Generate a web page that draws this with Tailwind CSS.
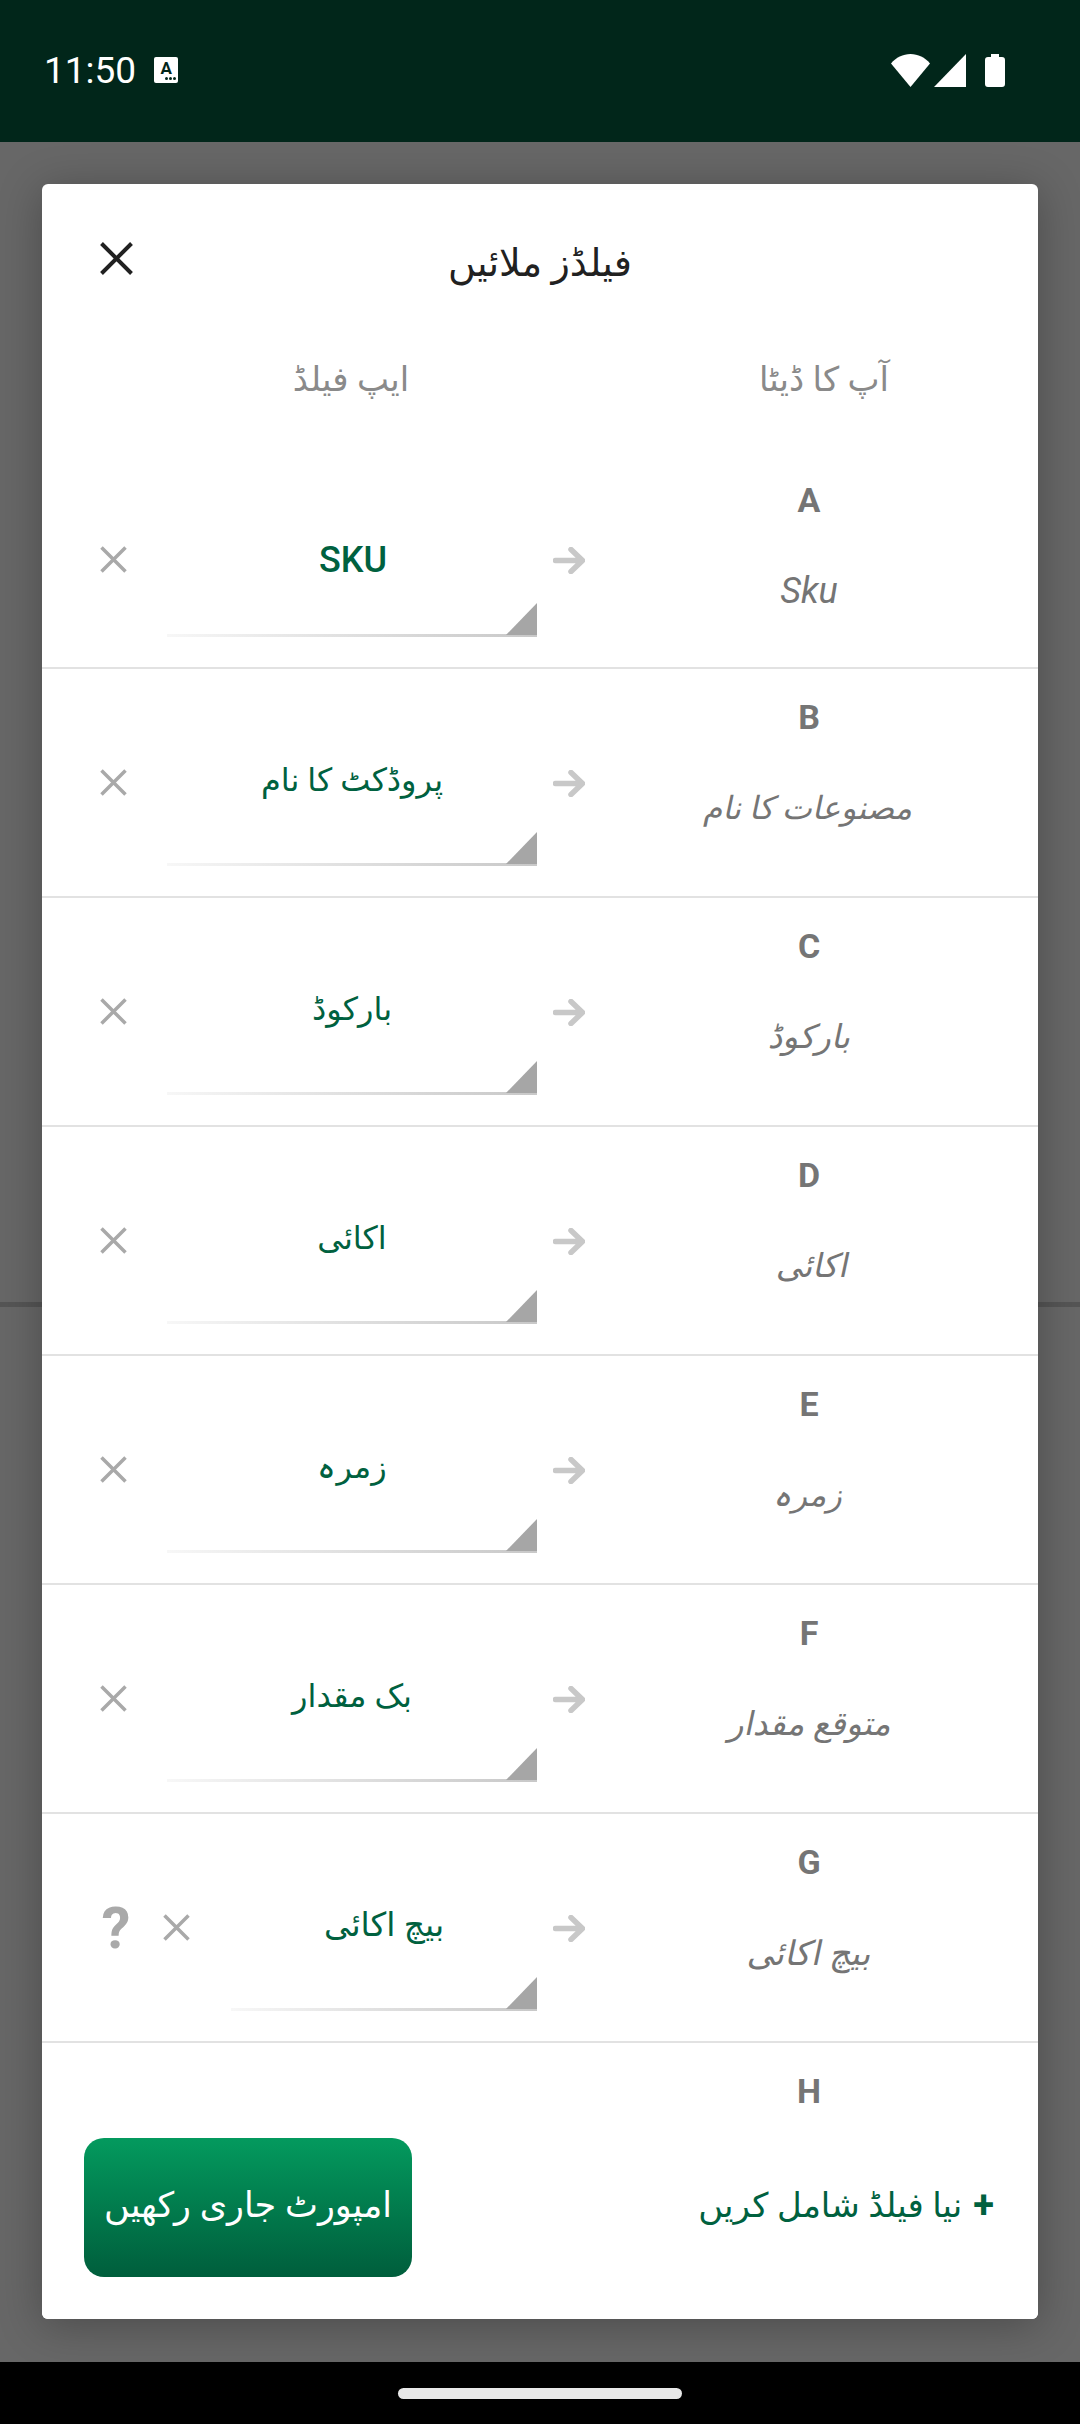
<!DOCTYPE html>
<html lang="ur">
<head>
<meta charset="UTF-8">
<meta name="viewport" content="width=device-width, initial-scale=1.0">
<title>Match fields</title>
<script src="https://cdn.jsdelivr.net/npm/@tailwindcss/browser@4"></script>
</head>
<body class="font-['Roboto','DejaVu_Sans',sans-serif]">
<div class="flex flex-col h-[2424px] w-[1080px] overflow-hidden">

  <!-- status bar -->
  <header class="h-[142px] shrink-0 bg-[#01261a] flex items-center justify-between pl-[44px] pr-[75px] pb-[2px] text-white">
    <div class="flex items-center gap-[18px]">
      <span class="text-[37px] leading-none">11:50</span>
      <div class="w-[24px] h-[26px] bg-white rounded-[2px] flex flex-col items-center pt-[3px] text-[#01261a]">
        <span class="text-[17px] font-bold leading-[16px]">A</span>
        <div class="flex gap-[1px] w-full justify-end pr-[2px] mt-[1px]">
          <span class="w-[3px] h-[3px] rounded-full bg-[#01261a]"></span>
          <span class="w-[3px] h-[3px] rounded-full bg-[#01261a]"></span>
          <span class="w-[3px] h-[3px] rounded-full bg-[#01261a]"></span>
        </div>
      </div>
    </div>
    <div class="flex items-center">
      <svg class="w-[39px] h-[33px]" viewBox="0 0 39 33"><path d="M19.5 33 0 9.5C5 3.500 12 0 19.500 0S34 3.500 39 9.500Z" fill="#fff"/></svg>
      <svg class="w-[32px] h-[33px] ml-[4px]" viewBox="0 0 32 33"><path d="M0 33 32 0V33Z" fill="#fff"/></svg>
      <svg class="w-[20px] h-[33px] ml-[19px]" viewBox="0 0 20 33"><path d="M6 0h8v3h3a3 3 0 0 1 3 3v24a3 3 0 0 1-3 3H3a3 3 0 0 1-3-3V6a3 3 0 0 1 3-3h3Z" fill="#fff"/></svg>
    </div>
  </header>

  <main class="relative flex-1 min-h-0 flex flex-col bg-[#676767] pt-[42px] px-[42px] pb-[43px]">
    <!-- divider of the page behind the dialog -->
    <div class="absolute left-0 right-0 top-[1160px] h-[5px] bg-[#555]"></div>

    <div class="relative flex-1 min-h-0 flex flex-col bg-white rounded-[6px] overflow-hidden shadow-[0_6px_44px_rgba(0,0,0,0.28)]">
      <!-- title -->
      <div class="h-[158px] shrink-0 grid grid-cols-[1fr_auto_1fr]">
        <svg class="w-[33px] h-[33px] ml-[58px] mt-[58px]" viewBox="0 0 33 33"><path d="M1.500 1.500 31.500 31.500M31.500 1.500 1.500 31.500" stroke="#212121" stroke-width="4" fill="none"/></svg>
        <h1 class="h-[60px] mt-[49px] leading-[60px] text-[38px] text-[#212121] font-normal" dir="rtl">فیلڈز ملائیں</h1>
      </div>
      <!-- column heads -->
      <div class="h-[74px] shrink-0 grid grid-cols-[618px_328px] items-center text-center text-[34px] text-[#8a8a8a]">
        <div dir="rtl">ایپ فیلڈ</div>
        <div dir="rtl">آپ کا ڈیٹا</div>
      </div>

      <!-- rows -->
      <div class="flex-1 min-h-0 overflow-hidden mt-[36px]">

        <div class="h-[217px] flex items-center pl-[58px] border-b-2 border-[#e2e2e2]">
          <svg class="w-[27px] h-[27px] shrink-0" viewBox="0 0 27 27"><path d="M1.500 1.500 25.500 25.500M25.500 1.500 1.500 25.500" stroke="#a9a9a9" stroke-width="3.500" fill="none"/></svg>
          <div class="relative ml-[40px] w-[370px] h-[154px] shrink-0 flex items-center justify-center pl-[2px] text-[36px] font-medium text-[#00613f]">
            SKU
            <div class="absolute left-0 right-0 bottom-0 h-[3px] bg-linear-to-r from-[#f7f7f7] to-[#c8c8c8]"></div>
            <svg class="absolute right-0 bottom-[2px] w-[31px] h-[32px]" viewBox="0 0 31 32"><path d="M0 32 31 0V32Z" fill="#a6a6a6"/></svg>
          </div>
          <svg class="w-[32px] h-[27px] ml-[16px] mt-[1px] shrink-0" viewBox="0 0 32 27"><path d="M2.500 13.500H29M18 2.500 29.500 13.500 18 24.500" stroke="#c8c8c8" stroke-width="5.500" stroke-linecap="round" stroke-linejoin="round" fill="none"/></svg>
          <div class="flex-1 mr-[5px] self-start flex flex-col items-center">
            <div class="mt-[24px] h-[48px] leading-[48px] text-[34px] font-bold text-[#757575]">A</div>
            <div class="mt-[37px] h-[60px] leading-[60px] text-[36px] italic text-[#757575]">Sku</div>
          </div>
        </div>

        <div class="h-[229px] flex items-center pl-[58px] border-b-2 border-[#e2e2e2]">
          <svg class="w-[27px] h-[27px] shrink-0" viewBox="0 0 27 27"><path d="M1.500 1.500 25.500 25.500M25.500 1.500 1.500 25.500" stroke="#a9a9a9" stroke-width="3.500" fill="none"/></svg>
          <div class="relative ml-[40px] w-[370px] h-[167px] shrink-0 flex items-center justify-center pb-[6px] text-[32px] text-[#00613f]" dir="rtl">
            پروڈکٹ کا نام
            <div class="absolute left-0 right-0 bottom-0 h-[3px] bg-linear-to-r from-[#f7f7f7] to-[#c8c8c8]"></div>
            <svg class="absolute right-0 bottom-[2px] w-[31px] h-[32px]" viewBox="0 0 31 32"><path d="M0 32 31 0V32Z" fill="#a6a6a6"/></svg>
          </div>
          <svg class="w-[32px] h-[27px] ml-[16px] mt-[1px] shrink-0" viewBox="0 0 32 27"><path d="M2.500 13.500H29M18 2.500 29.500 13.500 18 24.500" stroke="#c8c8c8" stroke-width="5.500" stroke-linecap="round" stroke-linejoin="round" fill="none"/></svg>
          <div class="flex-1 mr-[5px] self-start flex flex-col items-center">
            <div class="mt-[24px] h-[48px] leading-[48px] text-[34px] font-bold text-[#757575]">B</div>
            <div class="mt-[37px] ml-[2px] h-[60px] leading-[60px] text-[32px] text-[#757575] -skew-x-12" dir="rtl">مصنوعات کا نام</div>
          </div>
        </div>

        <div class="h-[229px] flex items-center pl-[58px] border-b-2 border-[#e2e2e2]">
          <svg class="w-[27px] h-[27px] shrink-0" viewBox="0 0 27 27"><path d="M1.500 1.500 25.500 25.500M25.500 1.500 1.500 25.500" stroke="#a9a9a9" stroke-width="3.500" fill="none"/></svg>
          <div class="relative ml-[40px] w-[370px] h-[167px] shrink-0 flex items-center justify-center pb-[6px] text-[32px] text-[#00613f]" dir="rtl">
            بارکوڈ
            <div class="absolute left-0 right-0 bottom-0 h-[3px] bg-linear-to-r from-[#f7f7f7] to-[#c8c8c8]"></div>
            <svg class="absolute right-0 bottom-[2px] w-[31px] h-[32px]" viewBox="0 0 31 32"><path d="M0 32 31 0V32Z" fill="#a6a6a6"/></svg>
          </div>
          <svg class="w-[32px] h-[27px] ml-[16px] mt-[1px] shrink-0" viewBox="0 0 32 27"><path d="M2.500 13.500H29M18 2.500 29.500 13.500 18 24.500" stroke="#c8c8c8" stroke-width="5.500" stroke-linecap="round" stroke-linejoin="round" fill="none"/></svg>
          <div class="flex-1 mr-[5px] self-start flex flex-col items-center">
            <div class="mt-[24px] h-[48px] leading-[48px] text-[34px] font-bold text-[#757575]">C</div>
            <div class="mt-[37px] ml-[5px] h-[60px] leading-[60px] text-[33px] text-[#757575] -skew-x-12" dir="rtl">بارکوڈ</div>
          </div>
        </div>

        <div class="h-[229px] flex items-center pl-[58px] border-b-2 border-[#e2e2e2]">
          <svg class="w-[27px] h-[27px] shrink-0" viewBox="0 0 27 27"><path d="M1.500 1.500 25.500 25.500M25.500 1.500 1.500 25.500" stroke="#a9a9a9" stroke-width="3.500" fill="none"/></svg>
          <div class="relative ml-[40px] w-[370px] h-[167px] shrink-0 flex items-center justify-center pb-[6px] text-[32px] text-[#00613f]" dir="rtl">
            اکائی
            <div class="absolute left-0 right-0 bottom-0 h-[3px] bg-linear-to-r from-[#f7f7f7] to-[#c8c8c8]"></div>
            <svg class="absolute right-0 bottom-[2px] w-[31px] h-[32px]" viewBox="0 0 31 32"><path d="M0 32 31 0V32Z" fill="#a6a6a6"/></svg>
          </div>
          <svg class="w-[32px] h-[27px] ml-[16px] mt-[1px] shrink-0" viewBox="0 0 32 27"><path d="M2.500 13.500H29M18 2.500 29.500 13.500 18 24.500" stroke="#c8c8c8" stroke-width="5.500" stroke-linecap="round" stroke-linejoin="round" fill="none"/></svg>
          <div class="flex-1 mr-[5px] self-start flex flex-col items-center">
            <div class="mt-[24px] h-[48px] leading-[48px] text-[34px] font-bold text-[#757575]">D</div>
            <div class="mt-[37px] ml-[10px] h-[60px] leading-[60px] text-[33px] text-[#757575] -skew-x-12" dir="rtl">اکائی</div>
          </div>
        </div>

        <div class="h-[229px] flex items-center pl-[58px] border-b-2 border-[#e2e2e2]">
          <svg class="w-[27px] h-[27px] shrink-0" viewBox="0 0 27 27"><path d="M1.500 1.500 25.500 25.500M25.500 1.500 1.500 25.500" stroke="#a9a9a9" stroke-width="3.500" fill="none"/></svg>
          <div class="relative ml-[40px] w-[370px] h-[167px] shrink-0 flex items-center justify-center pb-[6px] text-[32px] text-[#00613f]" dir="rtl">
            زمرہ
            <div class="absolute left-0 right-0 bottom-0 h-[3px] bg-linear-to-r from-[#f7f7f7] to-[#c8c8c8]"></div>
            <svg class="absolute right-0 bottom-[2px] w-[31px] h-[32px]" viewBox="0 0 31 32"><path d="M0 32 31 0V32Z" fill="#a6a6a6"/></svg>
          </div>
          <svg class="w-[32px] h-[27px] ml-[16px] mt-[1px] shrink-0" viewBox="0 0 32 27"><path d="M2.500 13.500H29M18 2.500 29.500 13.500 18 24.500" stroke="#c8c8c8" stroke-width="5.500" stroke-linecap="round" stroke-linejoin="round" fill="none"/></svg>
          <div class="flex-1 mr-[5px] self-start flex flex-col items-center">
            <div class="mt-[24px] h-[48px] leading-[48px] text-[34px] font-bold text-[#757575]">E</div>
            <div class="mt-[37px] ml-[2px] h-[60px] leading-[60px] text-[32px] text-[#757575] -skew-x-12" dir="rtl">زمرہ</div>
          </div>
        </div>

        <div class="h-[229px] flex items-center pl-[58px] border-b-2 border-[#e2e2e2]">
          <svg class="w-[27px] h-[27px] shrink-0" viewBox="0 0 27 27"><path d="M1.500 1.500 25.500 25.500M25.500 1.500 1.500 25.500" stroke="#a9a9a9" stroke-width="3.500" fill="none"/></svg>
          <div class="relative ml-[40px] w-[370px] h-[167px] shrink-0 flex items-center justify-center pb-[6px] text-[32px] text-[#00613f]" dir="rtl">
            بک مقدار
            <div class="absolute left-0 right-0 bottom-0 h-[3px] bg-linear-to-r from-[#f7f7f7] to-[#c8c8c8]"></div>
            <svg class="absolute right-0 bottom-[2px] w-[31px] h-[32px]" viewBox="0 0 31 32"><path d="M0 32 31 0V32Z" fill="#a6a6a6"/></svg>
          </div>
          <svg class="w-[32px] h-[27px] ml-[16px] mt-[1px] shrink-0" viewBox="0 0 32 27"><path d="M2.500 13.500H29M18 2.500 29.500 13.500 18 24.500" stroke="#c8c8c8" stroke-width="5.500" stroke-linecap="round" stroke-linejoin="round" fill="none"/></svg>
          <div class="flex-1 mr-[5px] self-start flex flex-col items-center">
            <div class="mt-[24px] h-[48px] leading-[48px] text-[34px] font-bold text-[#757575]">F</div>
            <div class="mt-[37px] ml-[5px] h-[60px] leading-[60px] text-[33px] text-[#757575] -skew-x-12" dir="rtl">متوقع مقدار</div>
          </div>
        </div>

        <div class="h-[229px] flex items-center pl-[59px] border-b-2 border-[#e2e2e2]">
          <span class="w-[30px] shrink-0 text-center text-[58px] leading-none font-bold text-[#a9a9a9]">?</span>
          <svg class="w-[27px] h-[27px] ml-[32px] shrink-0" viewBox="0 0 27 27"><path d="M1.500 1.500 25.500 25.500M25.500 1.500 1.500 25.500" stroke="#a9a9a9" stroke-width="3.500" fill="none"/></svg>
          <div class="relative ml-[41px] w-[306px] h-[167px] shrink-0 flex items-center justify-center pb-[6px] text-[33px] text-[#00613f]" dir="rtl">
            بیچ اکائی
            <div class="absolute left-0 right-0 bottom-0 h-[3px] bg-linear-to-r from-[#f7f7f7] to-[#c8c8c8]"></div>
            <svg class="absolute right-0 bottom-[2px] w-[31px] h-[32px]" viewBox="0 0 31 32"><path d="M0 32 31 0V32Z" fill="#a6a6a6"/></svg>
          </div>
          <svg class="w-[32px] h-[27px] ml-[16px] mt-[1px] shrink-0" viewBox="0 0 32 27"><path d="M2.500 13.500H29M18 2.500 29.500 13.500 18 24.500" stroke="#c8c8c8" stroke-width="5.500" stroke-linecap="round" stroke-linejoin="round" fill="none"/></svg>
          <div class="flex-1 mr-[5px] self-start flex flex-col items-center">
            <div class="mt-[24px] h-[48px] leading-[48px] text-[34px] font-bold text-[#757575]">G</div>
            <div class="mt-[37px] ml-[4px] h-[60px] leading-[60px] text-[34px] text-[#757575] -skew-x-12" dir="rtl">بیچ اکائی</div>
          </div>
        </div>

        <div class="h-[229px] flex justify-end">
          <div class="w-[448px] mr-[5px] flex flex-col items-center">
            <div class="mt-[24px] h-[48px] leading-[48px] text-[34px] font-bold text-[#757575]">H</div>
          </div>
        </div>
      </div>

      <!-- footer actions -->
      <div class="shrink-0 flex items-center justify-between bg-white pt-[13px] pb-[42px] pl-[42px] pr-[44px]">
        <button class="w-[328px] h-[139px] pb-[2px] rounded-[20px] bg-linear-to-b from-[#049a5e] to-[#005e3c] text-white text-[35px]" dir="rtl">امپورٹ جاری رکھیں</button>
        <div class="flex items-center gap-[11px] pb-[5px] text-[34px] text-[#00613f]">
          <span dir="rtl">نیا فیلڈ شامل کریں</span>
          <span class="text-[38px] font-bold leading-none">+</span>
        </div>
      </div>
    </div>
  </main>

  <!-- nav bar -->
  <footer class="h-[62px] shrink-0 bg-black flex items-center justify-center">
    <div class="w-[284px] h-[11px] rounded-full bg-[#e8e8e8]"></div>
  </footer>
</div>
</body>
</html>
